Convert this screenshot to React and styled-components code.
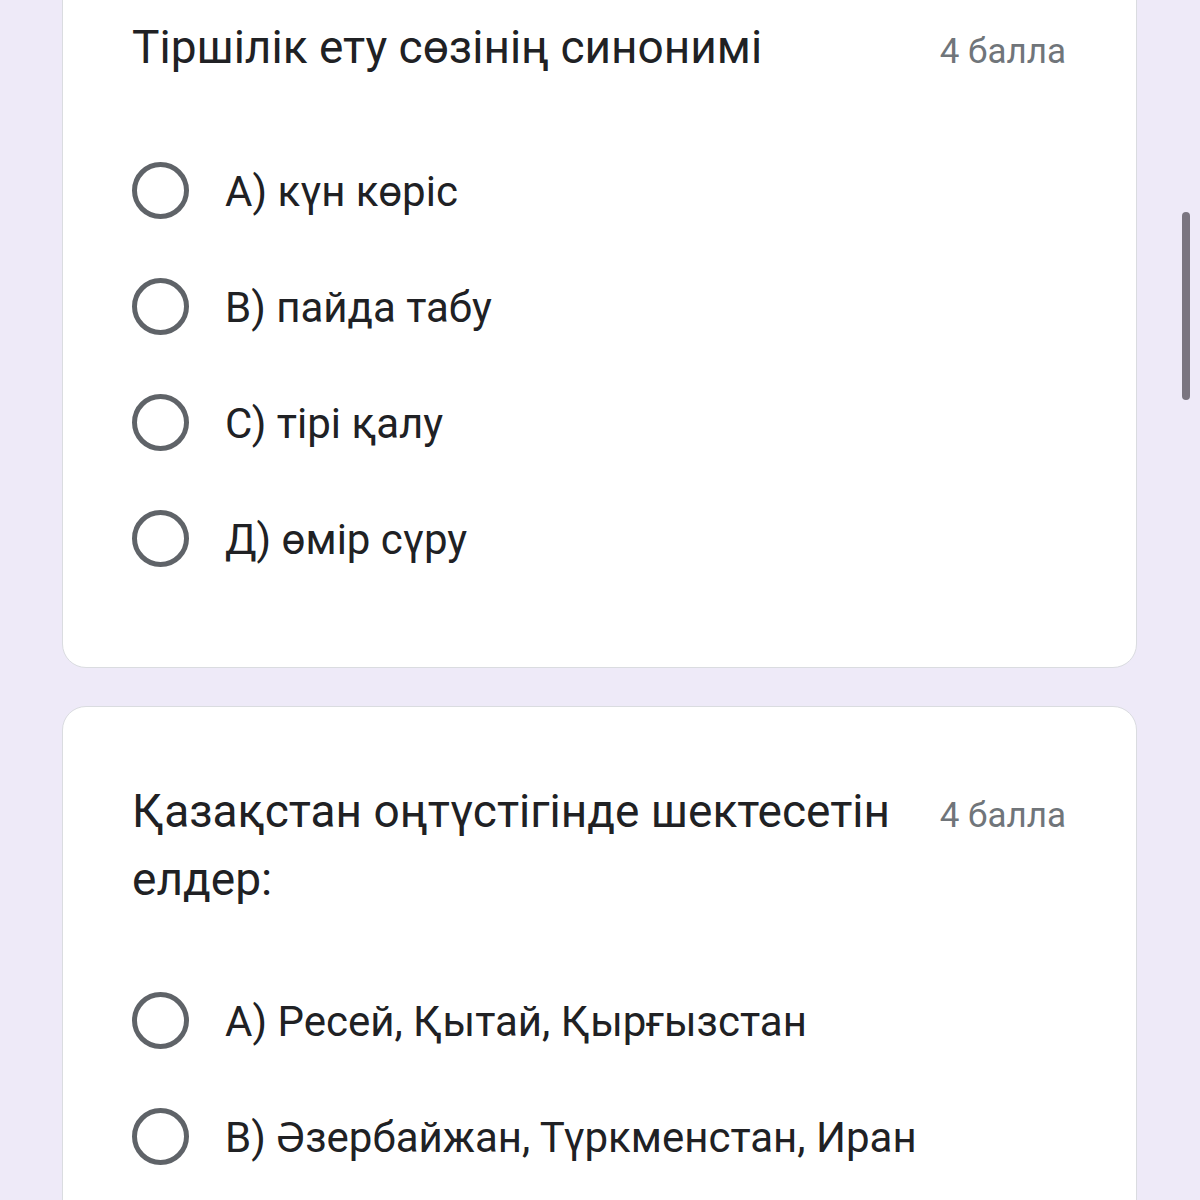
import React from "react";
import styled, { createGlobalStyle } from "styled-components";

const Global = createGlobalStyle`
  html, body { margin: 0; padding: 0; background: #eeeaf8; }
  body { font-family: Roboto, "Noto Sans", "Liberation Sans", sans-serif; overflow: hidden; }
`;

const Page = styled.div`
  min-height: 1200px;
  background: #eeeaf8;
  padding: 0 63px 0 62px;
  display: flex;
  flex-direction: column;
  gap: 38px;
`;

const Card = styled.section`
  background: #ffffff;
  border: 1px solid #dadce0;
  border-radius: 24px;
  padding: 70px 70px 71px 69px;
  margin-top: ${(p) => p.$offset || 0}px;
`;

const Header = styled.div`
  display: flex;
  align-items: baseline;
  gap: 36px;
`;

const Title = styled.div`
  flex: 1;
  font-size: 46px;
  line-height: 68px;
  color: #202124;
`;

const Points = styled.div`
  font-size: 35px;
  color: #70757a;
  white-space: nowrap;
`;

const Options = styled.div`
  display: flex;
  flex-direction: column;
  margin-top: ${(p) => p.$gap}px;
`;

const Row = styled.label`
  display: flex;
  align-items: center;
  height: 116px;
  gap: 36px;
`;

const Radio = styled.span`
  width: 57px;
  height: 57px;
  box-sizing: border-box;
  border: 5px solid #5f6368;
  border-radius: 50%;
  flex-shrink: 0;
`;

const Label = styled.span`
  font-size: 42px;
  color: #202124;
  margin-top: 2px;
`;

const Scrollbar = styled.div`
  position: fixed;
  left: 1182px;
  top: 212px;
  width: 8px;
  height: 188px;
  border-radius: 4px;
  background: #7a7580;
`;

const Question = ({ title, points, options, offset, gap = 51 }) => (
  <Card $offset={offset}>
    <Header>
      <Title>{title}</Title>
      <Points>{points}</Points>
    </Header>
    <Options $gap={gap}>
      {options.map((o) => (
        <Row key={o}>
          <Radio />
          <Label>{o}</Label>
        </Row>
      ))}
    </Options>
  </Card>
);

export default function App() {
  return (
    <>
      <Global />
      <Page>
        <Question
          offset={-58}
          title="Тіршілік ету сөзінің синонимі"
          points="4 балла"
          options={["А) күн көріс", "В) пайда табу", "С) тірі қалу", "Д) өмір сүру"]}
        />
        <Question
          gap={49}
          title="Қазақстан оңтүстігінде шектесетін елдер:"
          points="4 балла"
          options={[
            "А) Ресей, Қытай, Қырғызстан",
            "В) Әзербайжан, Түркменстан, Иран",
          ]}
        />
      </Page>
      <Scrollbar />
    </>
  );
}
